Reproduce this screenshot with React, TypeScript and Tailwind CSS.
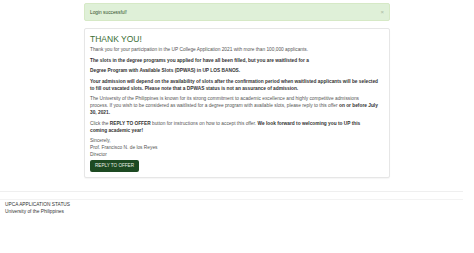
import React from "react";

const App = () => {
  return (
    <div className="min-h-screen bg-white pt-[3px] font-['Liberation_Sans',Arial,sans-serif] text-[4.8px] leading-[7px] text-[#555]">
      <div className="mx-auto w-[306px]">
        <div className="flex h-[18px] items-center justify-between rounded-[2px] border border-[#d6e9c6] bg-[#dff0d8] px-[5px] text-[#2f4f2a]">
          <span>Login successful!</span>
          <span className="text-[6px] text-[#a9b9a3]">×</span>
        </div>

        <div className="mt-[7px] rounded-[2px] border border-[#e6e6e6] bg-white px-[5px] pb-[5px] pt-[5px] shadow-[0_1px_1px_rgba(0,0,0,0.04)]">
          <h1 className="mb-[1px] text-[8.5px] leading-[11px] text-[#3b6e33]">THANK YOU!</h1>
          <p className="mb-[3.5px]">
            Thank you for your participation in the UP College Application 2021 with more than 100,000 applicants.
          </p>
          <p className="mb-[3.5px] font-bold text-[#333]">
            The slots in the degree programs you applied for have all been filled, but you are waitlisted for a
          </p>
          <p className="mb-[3.5px] font-bold text-[#333]">
            Degree Program with Available Slots (DPWAS) in UP LOS BANOS.
          </p>
          <p className="mb-[3.5px] whitespace-nowrap font-bold text-[#333]">
            Your admission will depend on the availability of slots after the confirmation period when waitlisted
            applicants will be selected
            <br />
            to fill out vacated slots. Please note that a DPWAS status is not an assurance of admission.
          </p>
          <p className="mb-[3.5px] whitespace-nowrap">
            The University of the Philippines is known for its strong commitment to academic excellence and highly
            competitive admissions
            <br />
            process. If you wish to be considered as waitlisted for a degree program with available slots, please
            reply to this offer <span className="font-bold text-[#333]">on or before July</span>
            <br />
            <span className="font-bold text-[#333]">30, 2021.</span>
          </p>
          <p className="mb-[3.5px] whitespace-nowrap">
            Click the <span className="font-bold text-[#333]">REPLY TO OFFER</span> button for instructions on how to
            accept this offer. <span className="font-bold text-[#333]">We look forward to welcoming you to UP this</span>
            <br />
            <span className="font-bold text-[#333]">coming academic year!</span>
          </p>
          <p className="mb-[1.5px]">
            Sincerely,
            <br />
            Prof. Francisco N. de los Reyes
            <br />
            Director
          </p>
          <button className="flex h-[12px] w-[49px] items-center justify-center rounded-[2px] bg-[#1d4a22] text-[4.6px] text-[#e8f0e6]">
            REPLY TO OFFER
          </button>
        </div>
      </div>

      <div className="mt-[13px] w-[463px] border-t border-[#efefef]" />
      <div className="mt-[7px] w-[463px] border-t border-[#f3f3f3]" />
      <div className="px-[5px] pt-[1px] text-[#333]">
        <div>UPCA APPLICATION STATUS</div>
        <div>University of the Philippines</div>
      </div>
    </div>
  );
};

export default App;
